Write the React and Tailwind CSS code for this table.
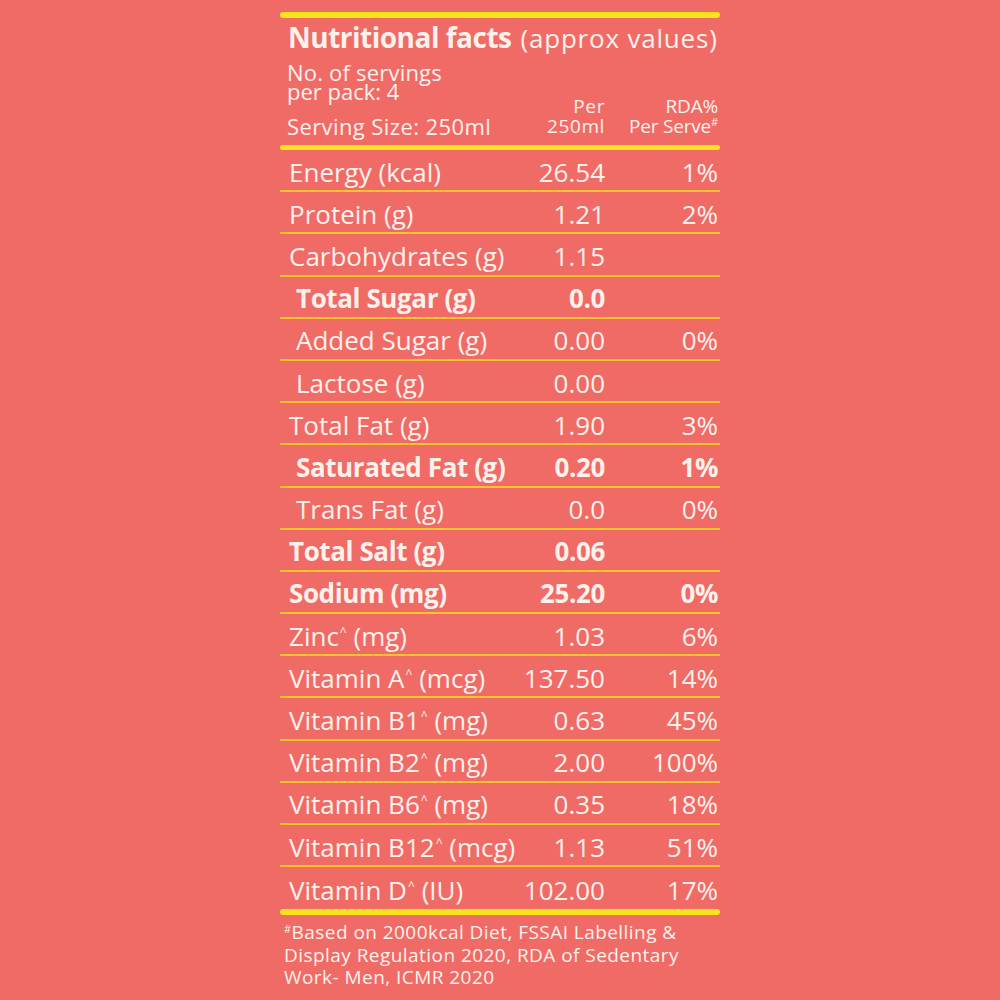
const ROWS = [
  { label: "Energy (kcal)", val: "26.54", rda: "1%" },
  { label: "Protein (g)", val: "1.21", rda: "2%" },
  { label: "Carbohydrates (g)", val: "1.15", rda: "" },
  { label: "Total Sugar (g)", val: "0.0", rda: "", bold: true, indent: true },
  { label: "Added Sugar (g)", val: "0.00", rda: "0%", indent: true },
  { label: "Lactose (g)", val: "0.00", rda: "", indent: true },
  { label: "Total Fat (g)", val: "1.90", rda: "3%" },
  { label: "Saturated Fat (g)", val: "0.20", rda: "1%", bold: true, indent: true },
  { label: "Trans Fat (g)", val: "0.0", rda: "0%", indent: true },
  { label: "Total Salt (g)", val: "0.06", rda: "", bold: true },
  { label: "Sodium (mg)", val: "25.20", rda: "0%", bold: true },
  { label: "Zinc", unit: "(mg)", val: "1.03", rda: "6%", caret: true },
  { label: "Vitamin A", unit: "(mcg)", val: "137.50", rda: "14%", caret: true },
  { label: "Vitamin B1", unit: "(mg)", val: "0.63", rda: "45%", caret: true },
  { label: "Vitamin B2", unit: "(mg)", val: "2.00", rda: "100%", caret: true },
  { label: "Vitamin B6", unit: "(mg)", val: "0.35", rda: "18%", caret: true },
  { label: "Vitamin B12", unit: "(mcg)", val: "1.13", rda: "51%", caret: true },
  { label: "Vitamin D", unit: "(IU)", val: "102.00", rda: "17%", caret: true },
];

function Row({ row, last }) {
  return (
    <div
      className={`flex h-[42.2px] items-center pt-[4px] whitespace-nowrap ${last ? "" : "border-b-2 border-[#f8c42c]"} ${
        row.bold ? "font-bold tracking-[-0.4px]" : "font-normal"
      }`}
    >
      <div className={`min-w-0 flex-1 overflow-visible ${row.indent ? "pl-[16px]" : "pl-[9px]"}`}>
        {row.label}
        {row.caret && (
          <>
            <span className="relative -top-[10px] ml-[1px] text-[12px] leading-[0]">^</span>{" "}
            {row.unit}
          </>
        )}
      </div>
      <div className="w-[120px] shrink-0 text-right">{row.val}</div>
      <div className="w-[115px] shrink-0 pr-[2px] text-right">{row.rda}</div>
    </div>
  );
}

export default function App() {
  return (
    <div className="min-h-[1000px] w-[1000px] bg-[#f06b66] text-[#fdf1ec] font-['Open_Sans',sans-serif]">
      <div className="ml-[280px] w-[440px] pt-[12px]">
        <div className="h-[6px] rounded-full bg-[#f8e31c]" />
        <div className="flex items-baseline gap-[9px] pl-[8px] pt-[3px] leading-[32px] whitespace-nowrap">
          <span className="text-[28px] font-bold tracking-[-0.5px]">Nutritional facts</span>
          <span className="text-[26px] tracking-[0.8px]">(approx values)</span>
        </div>
        <div className="mt-[9px] flex items-end pl-[7px] pb-[9px] text-[22px] leading-[19px] whitespace-nowrap">
          <div className="min-w-0 flex-1">
            <div className="tracking-[0.2px]">No. of servings</div>
            <div>per pack: 4</div>
            <div className="mt-[16px] tracking-[0.4px]">Serving Size: 250ml</div>
          </div>
          <div className="w-[120px] shrink-0 text-right text-[19px] leading-[20px] tracking-[0.6px]">
            <div>Per</div>
            <div>250ml</div>
          </div>
          <div className="w-[115px] shrink-0 pr-[2px] text-right text-[19px] leading-[20px] tracking-[-0.2px]">
            <div>RDA%</div>
            <div>
              Per Serve<span className="relative -top-[7px] text-[11px] leading-[0]">#</span>
            </div>
          </div>
        </div>
        <div className="h-[5px] rounded-full bg-[#f8e31c]" />
        <div className="text-[26px]">
          {ROWS.map((r, i) => (
            <Row key={r.label} row={r} last={i === ROWS.length - 1} />
          ))}
        </div>
        <div className="h-[6px] rounded-full bg-[#f8e31c]" />
        <div className="pl-[4px] pt-[6px] text-[19px] leading-[22.5px] tracking-[0.45px] whitespace-nowrap">
          <div>
            <span className="relative -top-[6px] text-[11px] leading-[0]">#</span>Based on 2000kcal Diet, FSSAI Labelling &amp;
          </div>
          <div>Display Regulation 2020, RDA of Sedentary</div>
          <div>Work- Men, ICMR 2020</div>
        </div>
      </div>
    </div>
  );
}
